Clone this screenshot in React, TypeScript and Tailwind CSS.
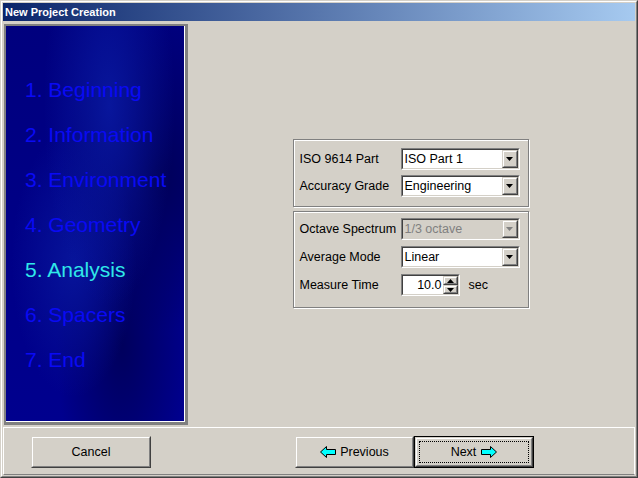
import React from 'react';

const steps = ['1. Beginning', '2. Information', '3. Environment', '4. Geometry', '5. Analysis', '6. Spacers', '7. End'];

function DropArrow({ disabled }: { disabled?: boolean }) {
  return (
    <svg width="7" height="4" viewBox="0 0 7 4" className="block">
      <polygon points="0,0 7,0 3.5,4" fill={disabled ? '#808080' : '#000000'} />
    </svg>
  );
}

function Sunken({ children, className = '' }: { children: React.ReactNode; className?: string }) {
  return (
    <div className={`border border-t-[#808080] border-l-[#808080] border-r-white border-b-white ${className}`}>
      <div className="h-full border border-t-[#404040] border-l-[#404040] border-r-[#d4d0c8] border-b-[#d4d0c8] flex">
        {children}
      </div>
    </div>
  );
}

function Raised({ children, className = '' }: { children?: React.ReactNode; className?: string }) {
  return (
    <div className={`border border-t-[#d4d0c8] border-l-[#d4d0c8] border-r-[#404040] border-b-[#404040] bg-[#d4d0c8] ${className}`}>
      <div className="h-full border border-t-white border-l-white border-r-[#808080] border-b-[#808080] flex items-center justify-center">
        {children}
      </div>
    </div>
  );
}

function Combo({ value, disabled }: { value: string; disabled?: boolean }) {
  return (
    <Sunken className="w-[119px] h-[22px]">
      <div className={`flex-1 flex items-center pl-[2px] ${disabled ? 'bg-[#d4d0c8] text-[#808080]' : 'bg-white text-black'}`}>
        {value}
      </div>
      <Raised className="w-[16px] h-full">
        <DropArrow disabled={disabled} />
      </Raised>
    </Sunken>
  );
}

function Row({ label, children }: { label: string; children: React.ReactNode }) {
  return (
    <div className="flex items-center h-[22px]">
      <div className="w-[101px] whitespace-nowrap">{label}</div>
      {children}
    </div>
  );
}

function Arrow({ dir }: { dir: 'left' | 'right' }) {
  return (
    <svg width="16" height="12" viewBox="0 0 16 12" className="block">
      <polygon
        points={dir === 'left' ? '0.5,6 6.5,0.5 6.5,3.5 15.5,3.5 15.5,8.5 6.5,8.5 6.5,11.5' : '15.5,6 9.5,0.5 9.5,3.5 0.5,3.5 0.5,8.5 9.5,8.5 9.5,11.5'}
        fill="#00ffff"
        stroke="#000000"
        strokeWidth="1"
      />
    </svg>
  );
}

export default function App() {
  return (
    <div
      className="w-[638px] h-[478px] bg-[#d4d0c8] border border-t-[#d4d0c8] border-l-[#d4d0c8] border-r-[#404040] border-b-[#404040] text-[12.5px] text-black"
      style={{ fontFamily: '"Liberation Sans", Arial, sans-serif' }}
    >
      <div className="h-full border border-t-white border-l-white border-r-[#808080] border-b-[#808080] p-px flex flex-col">
        {/* title bar */}
        <div className="h-[18px] shrink-0 flex items-center pl-[2px] bg-[linear-gradient(to_right,#0a246a,#a6caf0)] text-white font-bold text-[11px]">
          New Project Creation
        </div>

        {/* content */}
        <div className="flex-1 flex">
          <div className="ml-px mt-[3px] w-[184px] h-[401px] border-t-2 border-l-2 border-r-[3px] border-b-[3px] border-[#808080]">
            <div className="h-full border-r border-b border-white pt-[41px] pl-[19px] text-[21px] leading-[45px] bg-[radial-gradient(ellipse_at_58%_20%,#08169c_0%,transparent_45%),radial-gradient(ellipse_at_38%_60%,#07149a_0%,transparent_40%),radial-gradient(ellipse_at_85%_38%,#000058_0%,transparent_45%),radial-gradient(ellipse_at_65%_80%,#00005c_0%,transparent_40%),linear-gradient(#00007e,#00008e)]">
              {steps.map((s, i) => (
                <div key={s} className={i === 4 ? 'text-[#30e8e8]' : 'text-[#0a0af4]'}>
                  {s}
                </div>
              ))}
            </div>
          </div>

          <div className="flex-1 flex flex-col items-center justify-center gap-[4px] pb-[1px] pr-[2px]">
            <div className="w-[236px] h-[68px] border border-[#808080] shadow-[inset_1px_1px_0_#fff,1px_1px_0_#fff] px-[6px] pt-[8px] flex flex-col gap-[5px]">
              <Row label="ISO 9614 Part">
                <Combo value="ISO Part 1" />
              </Row>
              <Row label="Accuracy Grade">
                <Combo value="Engineering" />
              </Row>
            </div>
            <div className="w-[236px] h-[97px] border border-[#808080] shadow-[inset_1px_1px_0_#fff,1px_1px_0_#fff] px-[6px] pt-[6px] flex flex-col gap-[6px]">
              <Row label="Octave Spectrum">
                <Combo value="1/3 octave" disabled />
              </Row>
              <Row label="Average Mode">
                <Combo value="Linear" />
              </Row>
              <Row label="Measure Time">
                <Sunken className="w-[59px] h-[22px]">
                  <div className="flex-1 bg-white flex items-center justify-end pr-[1px]">10.0</div>
                  <div className="w-[15px] flex flex-col bg-white">
                    <Raised className="flex-1">
                      <svg width="7" height="4" viewBox="0 0 7 4" className="block">
                        <polygon points="0,4 7,4 3.5,0" fill="#000" />
                      </svg>
                    </Raised>
                    <Raised className="flex-1">
                      <DropArrow />
                    </Raised>
                  </div>
                </Sunken>
                <span className="ml-[9px]">sec</span>
              </Row>
            </div>
          </div>
        </div>

        {/* button bar */}
        <div className="h-[48px] shrink-0 border-t border-l border-r border-white border-b border-b-[#808080] flex items-start pt-[8px]">
          <Raised className="ml-[27px] w-[120px] h-[32px]">Cancel</Raised>
          <Raised className="ml-[144px] w-[119px] h-[32px]">
            <span className="flex items-center gap-[4px]">
              <Arrow dir="left" />
              Previous
            </span>
          </Raised>
          <div className="w-[120px] h-[32px] border border-black">
            <Raised className="h-full">
              <div className="w-[110px] h-[22px] border border-dotted border-black flex items-center justify-center gap-[5px]">
                Next
                <Arrow dir="right" />
              </div>
            </Raised>
          </div>
        </div>
      </div>
    </div>
  );
}
